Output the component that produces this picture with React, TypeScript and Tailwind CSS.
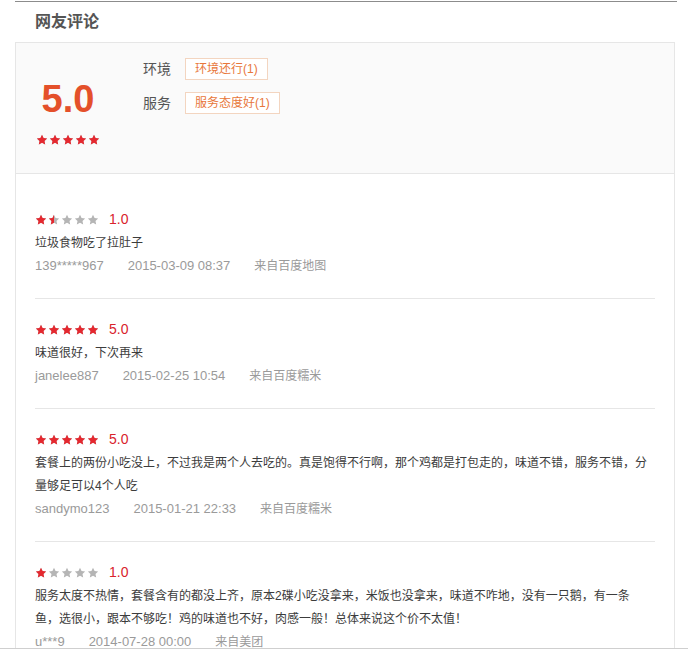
import { useId } from "react";

const STAR =
  "M12 1.5l3.1 6.6 7.2.9-5.3 5 1.4 7.1L12 17.6l-6.4 3.5 1.4-7.1-5.3-5 7.2-.9z";

function Star({ fill }: { fill: number }) {
  const id = useId();
  return (
    <svg width="12" height="12" viewBox="0 0 24 24">
      <defs>
        <clipPath id={id}>
          <rect x="0" y="0" width={24 * fill} height="24" />
        </clipPath>
      </defs>
      <path d={STAR} fill="#b5b5b5" />
      <path d={STAR} fill="#e5282f" clipPath={`url(#${id})`} />
    </svg>
  );
}

function Stars({ value }: { value: number }) {
  return (
    <div className="flex gap-px">
      {[0, 1, 2, 3, 4].map((i) => (
        <Star key={i} fill={Math.max(0, Math.min(1, value - i))} />
      ))}
    </div>
  );
}

interface Review {
  stars: number;
  score: string;
  text: string;
  user: string;
  date: string;
  source: string;
}

const reviews: Review[] = [
  {
    stars: 1.5,
    score: "1.0",
    text: "垃圾食物吃了拉肚子",
    user: "139*****967",
    date: "2015-03-09 08:37",
    source: "来自百度地图",
  },
  {
    stars: 5,
    score: "5.0",
    text: "味道很好，下次再来",
    user: "janelee887",
    date: "2015-02-25 10:54",
    source: "来自百度糯米",
  },
  {
    stars: 5,
    score: "5.0",
    text: "套餐上的两份小吃没上，不过我是两个人去吃的。真是饱得不行啊，那个鸡都是打包走的，味道不错，服务不错，分量够足可以4个人吃",
    user: "sandymo123",
    date: "2015-01-21 22:33",
    source: "来自百度糯米",
  },
  {
    stars: 1,
    score: "1.0",
    text: "服务太度不热情，套餐含有的都没上齐，原本2碟小吃没拿来，米饭也没拿来，味道不咋地，没有一只鹅，有一条鱼，选很小，跟本不够吃！鸡的味道也不好，肉感一般！总体来说这个价不太值！",
    user: "u***9",
    date: "2014-07-28 00:00",
    source: "来自美团",
  },
];

const tags = [
  { label: "环境", tag: "环境还行(1)" },
  { label: "服务", tag: "服务态度好(1)" },
];

export default function App() {
  return (
    <div className="w-[688px] h-[649px] overflow-hidden bg-white border-b border-[#cfcfcf] font-['Liberation_Sans','Noto_Sans_CJK_SC',sans-serif]">
      {/* previous section edge */}
      <div className="mt-px ml-[15px] w-[662px] border-t border-[#8c8c8c]" />

      {/* Title */}
      <div className="h-[40px] pl-[35px] flex items-center">
        <h2 className="text-[16px] font-bold text-[#555]">网友评论</h2>
      </div>

      <div className="ml-[15px] w-[660px] border border-[#e6e6e6] border-b-0">
        {/* Summary */}
        <div className="h-[131px] bg-[#fafafa] border-b border-[#e6e6e6] flex">
          <div className="w-[104px] pt-[37px] flex flex-col items-center">
            <div className="text-[38px] leading-[38px] font-bold text-[#e4502a]">5.0</div>
            <div className="mt-[16px]">
              <Stars value={5} />
            </div>
          </div>
          <div className="ml-[23px] pt-[15px] flex flex-col gap-[12px]">
            {tags.map((t) => (
              <div key={t.label} className="flex items-center h-[22px]">
                <span className="w-[42px] text-[14px] text-[#555]">{t.label}</span>
                <span className="h-[22px] px-[9px] flex items-center border border-[#f3d5c0] bg-white text-[12px] text-[#e8773a]">
                  {t.tag}
                </span>
              </div>
            ))}
          </div>
        </div>

        {/* Review list */}
        <div className="px-[19px] pt-[15px]">
          {reviews.map((r, i) => (
            <div key={i} className="pt-[19px] pb-[22px] border-b border-[#e6e6e6]">
              <div className="h-[23px] flex items-center">
                <Stars value={r.stars} />
                <span className="ml-[10px] text-[14px] text-[#d9232c]">{r.score}</span>
              </div>
              <p className="max-w-[614px] pt-px text-[12px] leading-[23px] text-[#3c3c3c]">{r.text}</p>
              <div className="h-[21px] flex items-center gap-[24px] text-[#9a9a9a]">
                <span className="text-[13px]">{r.user}</span>
                <span className="text-[13px]">{r.date}</span>
                <span className="text-[12px]">{r.source}</span>
              </div>
            </div>
          ))}
        </div>
      </div>
    </div>
  );
}
